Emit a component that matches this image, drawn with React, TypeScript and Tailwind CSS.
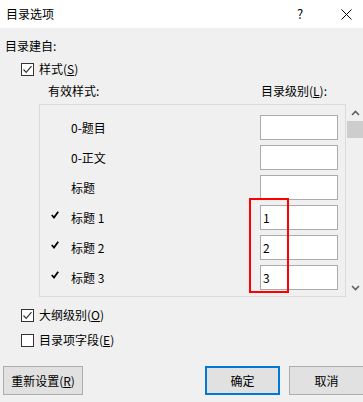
const font = { fontFamily: '"Microsoft YaHei UI", "Noto Sans CJK SC", "Noto Sans", sans-serif' };

const Check = () => (
  <svg width="11" height="11" viewBox="0 0 11 11">
    <path d="M1.5 5.5 L4.2 8.3 L9.5 2.2" fill="none" stroke="#333" strokeWidth="1.2" />
  </svg>
);

const Checkbox = ({ checked, children }: { checked: boolean; children: React.ReactNode }) => (
  <div className="flex items-center h-[16px]">
    <div className="w-[13px] h-[13px] border border-[#333333] bg-white flex items-center justify-center">
      {checked && <Check />}
    </div>
    <span className="ml-[5px] leading-[16px]">{children}</span>
  </div>
);

const rows = [
  { name: "0-题目", level: "", on: false },
  { name: "0-正文", level: "", on: false },
  { name: "标题", level: "", on: false },
  { name: "标题 1", level: "1", on: true },
  { name: "标题 2", level: "2", on: true },
  { name: "标题 3", level: "3", on: true },
];

const Tick = () => (
  <svg width="8" height="8" viewBox="0 0 8 8">
    <path d="M0.8 4 L3 6.5 L7.2 0.8" fill="none" stroke="#000" strokeWidth="1.8" />
  </svg>
);

const Btn = ({ children, primary, w }: { children: React.ReactNode; primary?: boolean; w: string }) => (
  <div
    className={`${w} h-[29px] flex items-center justify-center bg-[#e1e1e1] ${
      primary ? "border-2 border-[#0078d7]" : "border border-[#adadad]"
    }`}
  >
    {children}
  </div>
);

export default function App() {
  return (
    <div className="w-[363px] h-[402px] overflow-hidden bg-[#f0f0f0] text-[12px] text-black" style={font}>
      <div className="h-[28px] bg-white flex items-center">
        <span className="ml-[6px] flex-1">目录选项</span>
        <span className="w-[10px] text-center text-[13px] mr-[36px]">?</span>
        <svg width="11" height="11" viewBox="0 0 11 11" className="mr-[11px]">
          <path d="M0.5 0.5 L10.5 10.5 M10.5 0.5 L0.5 10.5" stroke="#000" strokeWidth="1" />
        </svg>
      </div>

      <div className="pl-[5px] mt-[10px] leading-[16px]">目录建自:</div>

      <div className="pl-[21px] mt-[7px]">
        <Checkbox checked>
          样式(<span className="underline">S</span>)
        </Checkbox>
      </div>

      <div className="flex mt-[6px] leading-[16px]">
        <span className="ml-[48px] w-[213px]">有效样式:</span>
        <span>
          目录级别(<span className="underline">L</span>):
        </span>
      </div>

      <div className="flex mt-[5px] h-[193px]">
        <div className="relative ml-[39px] w-[307px] border border-[#dadada] pt-[10px] pr-[7px]">
          <div className="flex flex-col gap-[5px]">
            {rows.map((r) => (
              <div key={r.name} className="flex items-center h-[25px]">
                <div className="w-[31px] pl-[11px] -mt-[6px] flex">{r.on && <Tick />}</div>
                <span className="flex-1 leading-[16px] mt-[1px]">{r.name}</span>
                <div className="w-[78px] h-[25px] border border-[#ababab] bg-white flex items-center pl-[2px]">
                  {r.level}
                </div>
              </div>
            ))}
          </div>
          <div className="absolute left-[209px] top-[93px] w-[40px] h-[95px] border-2 border-[#ff0000]" />
        </div>
        <div className="ml-[1px] w-[16px] flex flex-col items-center">
          <svg width="9" height="6" viewBox="0 0 9 6" className="mt-[6px]">
            <path d="M1 5 L4.5 1.5 L8 5" fill="none" stroke="#606060" strokeWidth="1.6" />
          </svg>
          <div className="w-[16px] h-[17px] bg-[#cdcdcd] mt-[5px]" />
          <div className="flex-1" />
          <svg width="9" height="6" viewBox="0 0 9 6" className="mb-[6px]">
            <path d="M1 1 L4.5 4.5 L8 1" fill="none" stroke="#606060" strokeWidth="1.6" />
          </svg>
        </div>
      </div>

      <div className="pl-[21px] mt-[10px] flex flex-col gap-[9px]">
        <Checkbox checked>
          大纲级别(<span className="underline">O</span>)
        </Checkbox>
        <Checkbox checked={false}>
          目录项字段(<span className="underline">E</span>)
        </Checkbox>
      </div>

      <div className="flex mt-[18px]">
        <div className="ml-[3px]">
          <Btn w="w-[80px]">
            重新设置(<span className="underline">R</span>)
          </Btn>
        </div>
        <div className="ml-[122px]">
          <Btn w="w-[75px]" primary>
            确定
          </Btn>
        </div>
        <div className="ml-[9px]">
          <Btn w="w-[75px]">取消</Btn>
        </div>
      </div>
    </div>
  );
}
